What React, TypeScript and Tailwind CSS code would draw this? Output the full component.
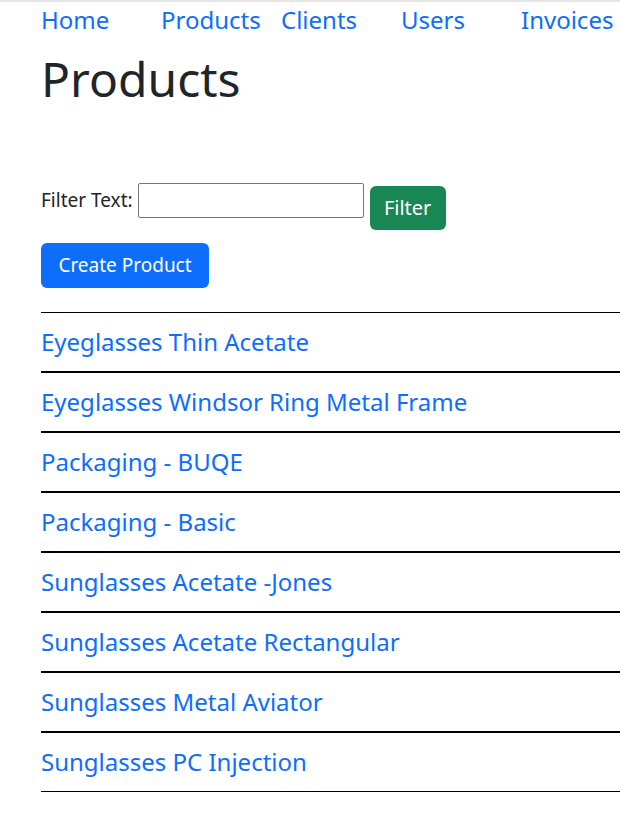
import { useState } from 'react'

const products = [
  'Eyeglasses Thin Acetate',
  'Eyeglasses Windsor Ring Metal Frame',
  'Packaging - BUQE',
  'Packaging - Basic',
  'Sunglasses Acetate -Jones',
  'Sunglasses Acetate Rectangular',
  'Sunglasses Metal Aviator',
  'Sunglasses PC Injection',
]

const navLinks = ['Home', 'Products', 'Clients', 'Users', 'Invoices']

export default function App() {
  const [filter, setFilter] = useState('')

  return (
    <div className="min-h-screen bg-white font-['Noto_Sans',sans-serif] text-[#212529] border-t-2 border-[#e5e5e5]">
      <div className="pl-[41px]">
        {/* top nav */}
        <nav className="flex h-[36px] items-center">
          {navLinks.map((l) => (
            <a
              key={l}
              href="#"
              className="w-[120px] shrink-0 text-[24px] leading-[36px] text-[#0d6efd]"
            >
              {l}
            </a>
          ))}
        </nav>

        <h1 className="mt-[12px] text-[48px] leading-[58px] font-normal">Products</h1>

        {/* filter row */}
        <div className="mt-[75px] flex items-start">
          <label className="mt-[3px] text-[19px] leading-[28px]">Filter Text:</label>
          <input
            value={filter}
            onChange={(e) => setFilter(e.target.value)}
            className="ml-[5px] h-[35px] w-[226px] rounded-[2px] border border-[#767676] px-1"
          />
          <button className="ml-[6px] mt-[3px] h-[44px] w-[76px] rounded-md bg-[#198754] text-[20px] text-white">
            Filter
          </button>
        </div>

        <button className="mt-[13px] h-[45px] w-[168px] rounded-md bg-[#0d6efd] text-[19px] text-white">
          Create Product
        </button>

        {/* product list */}
        <ul className="mt-[24px]">
          {products.map((p) => (
            <li
              key={p}
              className="flex h-[60px] items-center border-y border-black"
            >
              <a href="#" className="text-[24px] leading-[36px] text-[#0d6efd]">
                {p}
              </a>
            </li>
          ))}
        </ul>
      </div>
    </div>
  )
}
